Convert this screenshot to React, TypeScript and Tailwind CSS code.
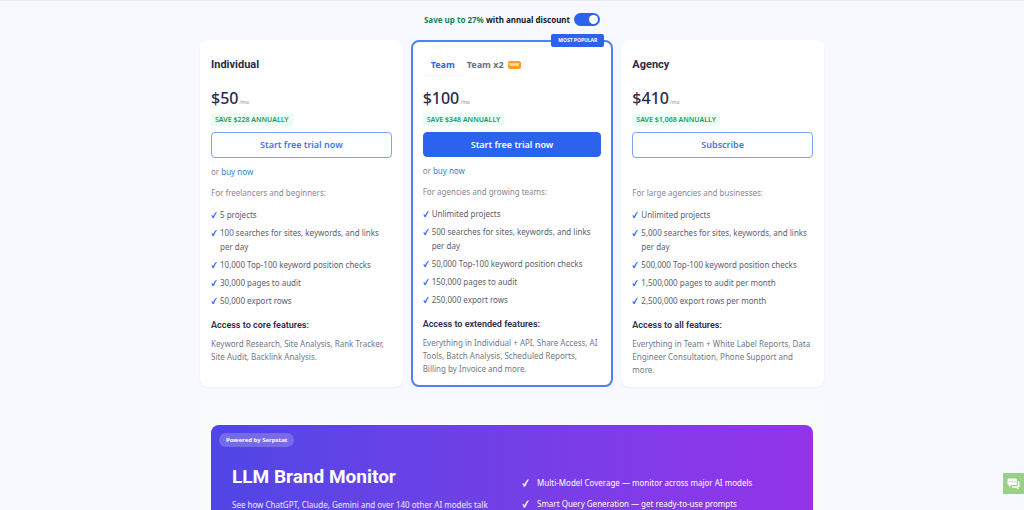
import React, { useState } from 'react';

type Plan = {
  name: string;
  price: string;
  save: string;
  cta: string;
  buyNow: boolean;
  popular?: boolean;
  audience: string;
  features: string[];
  accessTitle: string;
  access: string;
};

const plans: Plan[] = [
  {
    name: 'Individual',
    price: '$50',
    save: 'SAVE $228 ANNUALLY',
    cta: 'Start free trial now',
    buyNow: true,
    audience: 'For freelancers and beginners:',
    features: [
      '5 projects',
      '100 searches for sites, keywords, and links per day',
      '10,000 Top-100 keyword position checks',
      '30,000 pages to audit',
      '50,000 export rows',
    ],
    accessTitle: 'Access to core features:',
    access: 'Keyword Research, Site Analysis, Rank Tracker, Site Audit, Backlink Analysis.',
  },
  {
    name: 'Team',
    price: '$100',
    save: 'SAVE $348 ANNUALLY',
    cta: 'Start free trial now',
    buyNow: true,
    popular: true,
    audience: 'For agencies and growing teams:',
    features: [
      'Unlimited projects',
      '500 searches for sites, keywords, and links per day',
      '50,000 Top-100 keyword position checks',
      '150,000 pages to audit',
      '250,000 export rows',
    ],
    accessTitle: 'Access to extended features:',
    access:
      'Everything in Individual + API, Share Access, AI Tools, Batch Analysis, Scheduled Reports, Billing by Invoice and more.',
  },
  {
    name: 'Agency',
    price: '$410',
    save: 'SAVE $1,068 ANNUALLY',
    cta: 'Subscribe',
    buyNow: false,
    audience: 'For large agencies and businesses:',
    features: [
      'Unlimited projects',
      '5,000 searches for sites, keywords, and links per day',
      '500,000 Top-100 keyword position checks',
      '1,500,000 pages to audit per month',
      '2,500,000 export rows per month',
    ],
    accessTitle: 'Access to all features:',
    access: 'Everything in Team + White Label Reports, Data Engineer Consultation, Phone Support and more.',
  },
];

const monitorFeatures = [
  'Multi-Model Coverage — monitor across major AI models',
  'Smart Query Generation — get ready-to-use prompts',
];

const Check = ({ className }: { className: string }) => (
  <svg viewBox="0 0 14 16" className={className} fill="currentColor" stroke="currentColor" strokeWidth="0.4" aria-hidden="true">
    <path d="M1 9.6 C2.2 8.3 3.4 8.4 4.1 10.2 L4.8 11.4 C6.6 7.2 9 3.6 11.6 1 L13.6 0.8 C10.8 5 8.6 9.4 6.6 14.4 C5.6 15.2 4.6 15.4 3.6 15.2 C3 13 2.4 10.6 1 9.6 Z" />
  </svg>
);

const TeamTabs = () => {
  const [tab, setTab] = useState<'team' | 'x2'>('team');
  return (
    <div className="flex h-[22px] items-center text-[9px] font-bold">
      <button
        onClick={() => setTab('team')}
        className={`h-full border-b px-2 ${tab === 'team' ? 'border-gray-100 text-[#2b63ee]' : 'border-transparent text-[#6b7080]'}`}
      >
        Team
      </button>
      <button
        onClick={() => setTab('x2')}
        className={`flex h-full items-center gap-1 border-b px-1 ${tab === 'x2' ? 'border-gray-100 text-[#2b63ee]' : 'border-transparent text-[#6b7080]'}`}
      >
        Team x2
        <span className="rounded-xs bg-[#ff9a2e] px-[2px] text-[4px] leading-[8px] font-bold text-white">NEW</span>
      </button>
    </div>
  );
};

const PlanCard = ({ plan }: { plan: Plan }) => (
  <article
    className={`relative rounded-lg bg-white pb-[10px] ${
      plan.popular ? 'border-2 border-[#4f80f7] px-[10px] pt-3' : 'px-[11px] pt-[14px] shadow-xs'
    }`}
  >
    {plan.popular && (
      <span className="absolute -top-2 right-[7px] rounded-xs bg-[#2b63ee] px-[7px] text-[5px] leading-[13px] font-bold text-white">
        MOST POPULAR
      </span>
    )}
    {plan.popular ? (
      <TeamTabs />
    ) : (
      <h2 className="font-[Roboto] text-[11px] leading-[22px] font-bold text-[#2d2a4a]">{plan.name}</h2>
    )}
    <p className="mt-[10px] flex items-baseline text-[16px] leading-6 font-medium text-[#2d2a4a]">
      {plan.price}
      <span className="ml-px text-[5px] leading-none font-normal text-[#8b8f9d]">/mo</span>
    </p>
    <p className="mt-[3px] w-fit rounded-xs bg-[#ecfdf5] px-1 text-[7px] leading-[13px] font-semibold text-[#1c9a68]">
      {plan.save}
    </p>
    <button
      className={`mt-[6px] block w-full rounded-sm border text-[9px] font-semibold ${
        plan.popular ? 'h-[25px] border-[#2b63ee] bg-[#2b63ee] text-white' : 'h-[26px] border-[#7ea2fa] bg-white text-[#4374f3]'
      }`}
    >
      {plan.cta}
    </button>
    <p className="mt-[7px] h-[14px] leading-[14px] text-[#858998]">
      {plan.buyNow && (
        <>
          or{' '}
          <a href="#buy" className="text-[#3182d6]">
            buy now
          </a>
        </>
      )}
    </p>
    <p className="mt-[7px] leading-[14px] text-[#858998]">{plan.audience}</p>
    <ul className="mt-2 space-y-1 leading-[14px] text-[#5b6070]">
      {plan.features.map(f => (
        <li key={f} className="flex gap-[3px]">
          <Check className="mt-[3px] h-2 w-[6px] shrink-0 text-[#2f6bff]" />
          {f}
        </li>
      ))}
    </ul>
    <h3 className="mt-[10px] font-[Roboto] text-[9px] leading-[14px] font-semibold text-[#2d2a4a]">{plan.accessTitle}</h3>
    <p className="mt-[5px] leading-[13px] text-[#747988]">{plan.access}</p>
  </article>
);

const App = () => {
  const [annual, setAnnual] = useState(true);

  return (
    <div className="h-screen overflow-hidden border-t border-[#e9ebf1] bg-[#f8f9fe] font-['Noto_Sans',sans-serif] text-[8px]">
      <main className="mx-auto max-w-[624px]">
        {/* Billing period switch */}
        <label className="mt-3 flex items-center justify-center gap-1 text-[8px] leading-[13px] font-bold text-[#16161f]">
          <span>
            <span className="text-[#15835a]">Save up to 27%</span> with annual discount
          </span>
          <span className="relative inline-flex">
            <input
              type="checkbox"
              role="switch"
              checked={annual}
              onChange={e => setAnnual(e.target.checked)}
              className="peer h-[13px] w-[26px] appearance-none rounded-full bg-gray-300 checked:bg-[#2b63ee]"
            />
            <span className="pointer-events-none absolute top-[2px] left-[2px] size-[9px] rounded-full bg-white peer-checked:left-[15px]" />
          </span>
        </label>

        {/* Plans */}
        <section className="mt-[14px] grid grid-cols-3 gap-2">
          {plans.map(p => (
            <PlanCard key={p.name} plan={p} />
          ))}
        </section>

        {/* LLM Brand Monitor banner */}
        <section className="mt-4 bg-[#fafbfd] px-[11px] pt-[22px] pb-6">
          <div className="rounded-lg bg-linear-to-r from-[#4f46e5] to-[#9333ea] px-2 pt-2 pb-6 text-white">
            <span className="block w-fit rounded-full bg-white/20 px-[7px] text-[6px] leading-[14px] font-bold">
              Powered by Serpstat
            </span>
            <div className="grid grid-cols-2 gap-5 px-[13px] pt-[18px]">
              <div>
                <h2 className="font-[Roboto] text-[19px] leading-6 font-bold">LLM Brand Monitor</h2>
                <p className="mt-[9px] leading-[14px] text-white/90">
                  See how ChatGPT, Claude, Gemini and over 140 other AI models talk about your brand.
                </p>
              </div>
              <ul className="space-y-[7px] pt-[11px] leading-[14px]">
                {monitorFeatures.map(f => (
                  <li key={f} className="flex items-center gap-2">
                    <Check className="h-2 w-[7px] shrink-0" />
                    {f}
                  </li>
                ))}
              </ul>
            </div>
          </div>
        </section>
      </main>

      <button
        aria-label="Open chat"
        className="fixed right-0 bottom-4 flex size-[21px] items-center justify-center bg-[#9bd08a] text-white"
      >
        <svg viewBox="0 0 24 22" className="h-3 w-[13px]" fill="currentColor">
          <path d="M3 1h13a2 2 0 0 1 2 2v8a2 2 0 0 1-2 2H8l-4 4v-4H3a2 2 0 0 1-2-2V3a2 2 0 0 1 2-2z" />
          <path d="M20 6h1a2 2 0 0 1 2 2v8a2 2 0 0 1-2 2v3l-4-3h-6a2 2 0 0 1-2-2v-1h8a3 3 0 0 0 3-3z" />
          <g fill="#8cc57b">
            <circle cx="5.5" cy="7" r="1.3" />
            <circle cx="9.5" cy="7" r="1.3" />
            <circle cx="13.5" cy="7" r="1.3" />
          </g>
        </svg>
      </button>
    </div>
  );
};

export default App;
